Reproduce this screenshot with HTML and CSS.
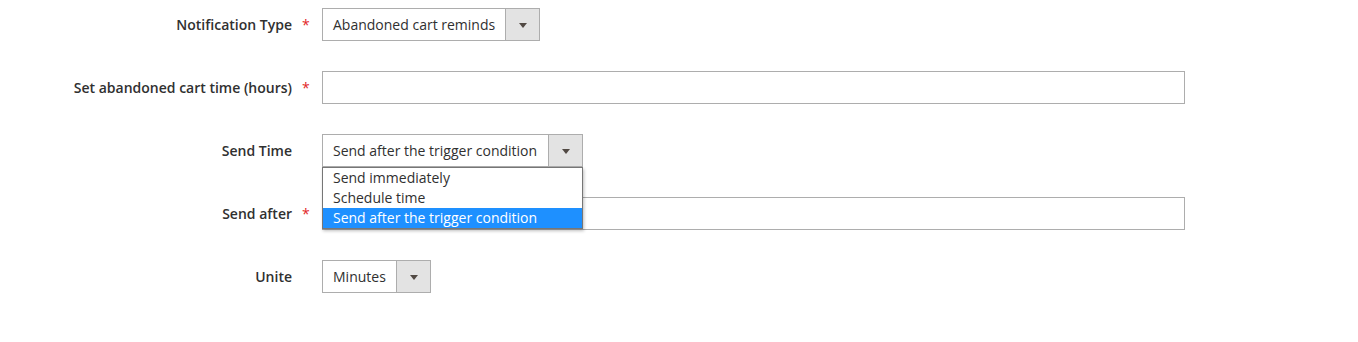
FILE: index.html
```html
<!DOCTYPE html>
<html>
<head>
<meta charset="utf-8">
<link rel="stylesheet" href="styles.css">
</head>
<body>
<div class="form">
  <div class="row">
    <div class="label">Notification Type</div>
    <div class="req"><span class="star">*</span></div>
    <div class="select w-type"><span class="value">Abandoned cart reminds</span><span class="arrow"></span></div>
  </div>
  <div class="row">
    <div class="label">Set abandoned cart time (hours)</div>
    <div class="req"><span class="star">*</span></div>
    <div class="input"></div>
  </div>
  <div class="row">
    <div class="label">Send Time</div>
    <div class="req"></div>
    <div class="select-wrap">
      <div class="select w-send"><span class="value">Send after the trigger condition</span><span class="arrow"></span></div>
      <ul class="dropdown">
        <li>Send immediately</li>
        <li>Schedule time</li>
        <li class="selected">Send after the trigger condition</li>
      </ul>
    </div>
  </div>
  <div class="row">
    <div class="label">Send after</div>
    <div class="req"><span class="star">*</span></div>
    <div class="input"></div>
  </div>
  <div class="row">
    <div class="label">Unite</div>
    <div class="req"></div>
    <div class="select w-unit"><span class="value">Minutes</span><span class="arrow"></span></div>
  </div>
</div>
</body>
</html>
```
FILE: styles.css
```css
html, body {
  margin: 0;
  padding: 0;
  background: #ffffff;
}
body {
  font-family: "Open Sans", "Liberation Sans", sans-serif;
  font-size: 14px;
  color: #303030;
}
.form {
  padding-top: 8px;
  display: flex;
  flex-direction: column;
  gap: 30px;
}
.row {
  display: flex;
  align-items: flex-start;
  height: 33px;
}
.label {
  width: 292px;
  text-align: right;
  font-weight: 600;
  line-height: 33px;
  color: #303030;
}
.req {
  width: 30px;
  box-sizing: border-box;
  padding-left: 10px;
  line-height: 33px;
}
.star {
  color: #e22626;
  font-size: 14px;
}
.input {
  width: 863px;
  height: 33px;
  box-sizing: border-box;
  border: 1px solid #adadad;
  background: #fff;
}
.select-wrap {
  position: relative;
}
.select {
  display: flex;
  height: 33px;
  box-sizing: border-box;
  border: 1px solid #adadad;
  background: #fff;
}
.w-type { width: 218px; }
.w-send { width: 261px; }
.w-unit { width: 109px; }
.value {
  flex: 1;
  padding-left: 10px;
  line-height: 31px;
  white-space: nowrap;
  overflow: hidden;
}
.arrow {
  width: 33px;
  flex: none;
  background: #e3e3e3;
  border-left: 1px solid #adadad;
  display: flex;
  align-items: center;
  justify-content: center;
}
.arrow::after {
  content: "";
  width: 0;
  height: 0;
  border-left: 4px solid transparent;
  border-right: 4px solid transparent;
  border-top: 5px solid #514943;
  margin-top: 1px;
}
.dropdown {
  position: absolute;
  top: 33px;
  left: 0;
  width: 261px;
  box-sizing: border-box;
  margin: 0;
  padding: 0;
  list-style: none;
  background: #fff;
  border: 1px solid #767676;
  box-shadow: 1px 2px 3px rgba(0, 0, 0, 0.25);
  z-index: 5;
}
.dropdown li {
  height: 20px;
  line-height: 20px;
  padding-left: 10px;
  color: #303030;
  white-space: nowrap;
}
.dropdown li.selected {
  background: #1e90ff;
  color: #ffffff;
}
```
